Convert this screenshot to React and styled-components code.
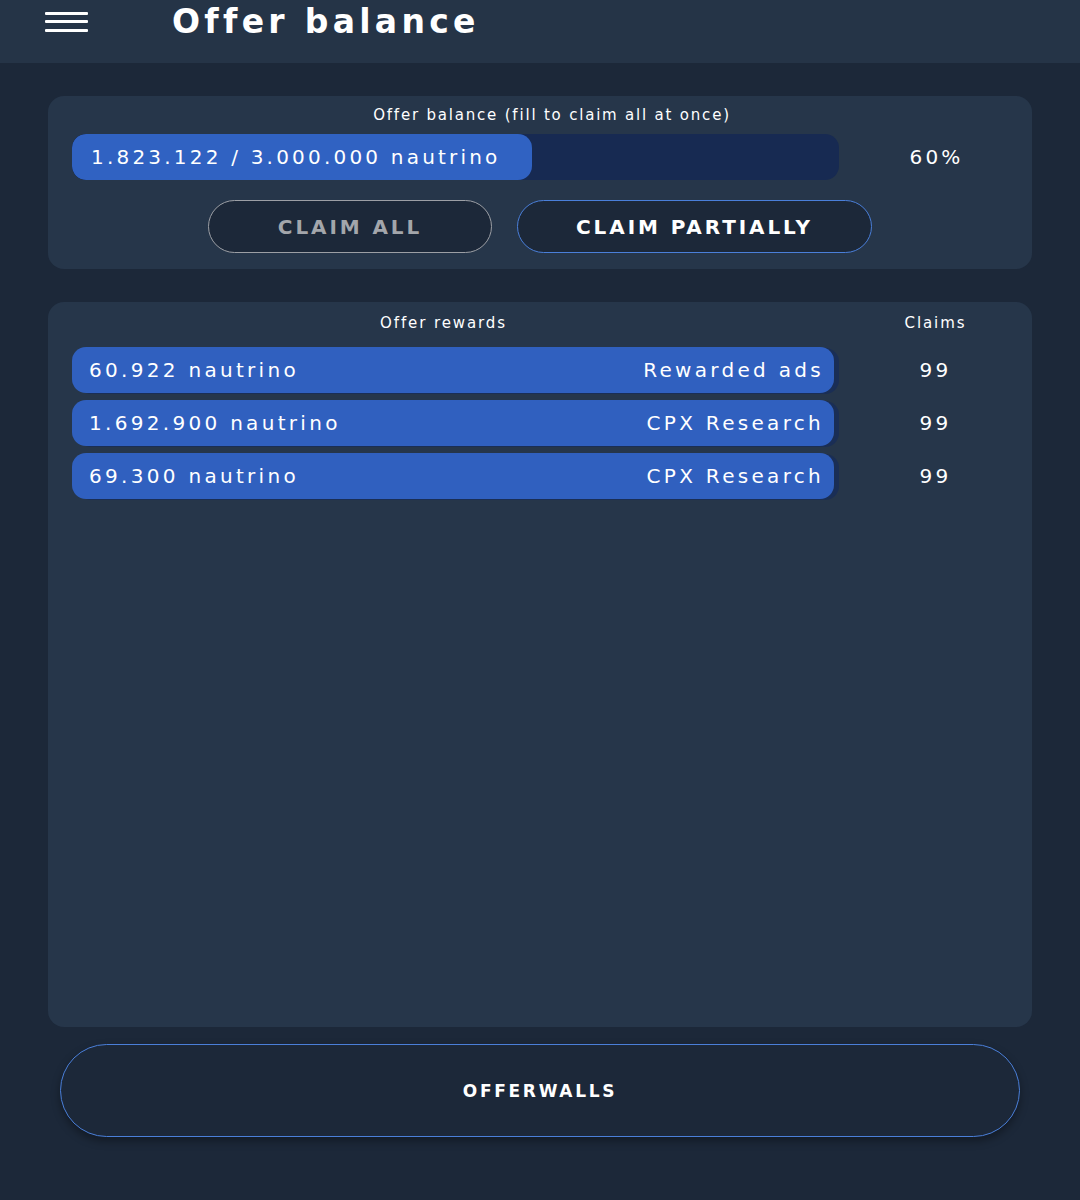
import React from "react";
import styled, { createGlobalStyle } from "styled-components";

const GlobalStyle = createGlobalStyle`
  html, body {
    margin: 0;
    padding: 0;
    background: #1c2839;
  }
  * {
    box-sizing: border-box;
  }
`;

const Page = styled.div`
  display: flex;
  flex-direction: column;
  min-height: 100vh;
  background: #1c2839;
  color: #ffffff;
  font-family: "DejaVu Sans", Verdana, sans-serif;
`;

const TopBar = styled.header`
  display: flex;
  align-items: center;
  height: 63px;
  padding: 0 0 20px 45px;
  background: #253447;
`;

const MenuButton = styled.button`
  display: flex;
  flex-direction: column;
  justify-content: space-between;
  width: 43px;
  height: 20px;
  padding: 0;
  border: none;
  background: transparent;
  cursor: pointer;

  span {
    display: block;
    height: 3px;
    background: #ffffff;
    border-radius: 1px;
  }
`;

const PageTitle = styled.h1`
  margin: 0 0 0 84px;
  font-size: 33px;
  font-weight: bold;
  letter-spacing: 4.3px;
  color: #ffffff;
`;

const Content = styled.main`
  flex: 1;
  display: flex;
  flex-direction: column;
  padding: 33px 48px 63px;
`;

const Card = styled.section`
  background: #26364a;
  border-radius: 16px;
  ${({ $grow }) => $grow && "flex: 1;"}
  margin-bottom: ${({ $gap }) => $gap || 0}px;
`;

const BalanceCard = styled(Card)`
  padding: 10px 0 16px 24px;
`;

const Caption = styled.div`
  font-size: 15px;
  letter-spacing: 1.8px;
  color: #ffffff;
  text-align: center;
`;

const BalanceRow = styled.div`
  display: grid;
  grid-template-columns: 767px 1fr;
  align-items: center;
  margin-top: 10px;
`;

const Track = styled.div`
  height: 46px;
  border-radius: 14px;
  background: #172a52;
  overflow: hidden;
`;

const Fill = styled.div`
  display: flex;
  align-items: center;
  height: 100%;
  padding-left: 19px;
  border-radius: 14px;
  background: #3062c2;
  font-size: 20px;
  letter-spacing: 3.2px;
  white-space: nowrap;
`;

const Percent = styled.div`
  text-align: center;
  font-size: 20px;
  letter-spacing: 3.2px;
  padding-left: 2px;
`;

const ButtonRow = styled.div`
  display: flex;
  justify-content: center;
  gap: 25px;
  margin-top: 20px;
  padding-right: 24px;
`;

const PillButton = styled.button`
  width: ${({ $w }) => $w}px;
  height: 53px;
  border-radius: 27px;
  background: #1c2839;
  border: 1.5px solid ${({ $muted }) => ($muted ? "#9c9fa5" : "#4a7fd9")};
  color: ${({ $muted }) => ($muted ? "#a3a6ab" : "#ffffff")};
  font-family: "DejaVu Sans", Verdana, sans-serif;
  font-size: 20px;
  font-weight: bold;
  letter-spacing: 2.9px;
  cursor: pointer;
`;

const RewardsCard = styled(Card)`
  padding: 12px 0 24px 24px;
`;

const RewardsGrid = styled.div`
  display: grid;
  grid-template-columns: 767px 1fr;
  row-gap: 7px;
  align-items: center;
`;

const ColumnHead = styled.div`
  font-size: 15px;
  letter-spacing: 1.9px;
  text-align: center;
  padding-right: ${({ $shift }) => $shift || 0}px;
  margin-bottom: 8px;
`;

const RewardRow = styled.div`
  display: flex;
  justify-content: space-between;
  align-items: center;
  height: 46px;
  width: 762px;
  padding: 0 10px 0 17px;
  border-radius: 14px;
  background: #3060bf;
  box-shadow: 5px 1px 0 #1a2e55;
  font-size: 20px;
  letter-spacing: 3.3px;
  white-space: nowrap;
`;

const ClaimCount = styled.div`
  text-align: center;
  font-size: 20px;
  letter-spacing: 3.2px;
`;

const WideButton = styled.button`
  height: 93px;
  margin: 17px 12px 0;
  border-radius: 47px;
  background: #1c2839;
  border: 1.5px solid #4a7fd9;
  box-shadow: 0 4px 8px rgba(0, 0, 0, 0.35);
  color: #ffffff;
  font-family: "DejaVu Sans", Verdana, sans-serif;
  font-size: 17px;
  font-weight: bold;
  letter-spacing: 2.7px;
  cursor: pointer;
`;

const rewards = [
  { amount: "60.922 nautrino", source: "Rewarded ads", claims: 99 },
  { amount: "1.692.900 nautrino", source: "CPX Research", claims: 99 },
  { amount: "69.300 nautrino", source: "CPX Research", claims: 99 },
];

const balance = 1823122;
const target = 3000000;

const fmt = (n) => n.toString().replace(/\B(?=(\d{3})+(?!\d))/g, ".");

export default function App() {
  const pct = Math.floor((balance / target) * 100);

  return (
    <>
      <GlobalStyle />
      <Page>
        <TopBar>
          <MenuButton aria-label="Menu">
            <span />
            <span />
            <span />
          </MenuButton>
          <PageTitle>Offer balance</PageTitle>
        </TopBar>

        <Content>
          <BalanceCard $gap={33}>
            <Caption>Offer balance (fill to claim all at once)</Caption>
            <BalanceRow>
              <Track>
                <Fill style={{ width: `${pct}%` }}>
                  {fmt(balance)} / {fmt(target)} nautrino
                </Fill>
              </Track>
              <Percent>{pct}%</Percent>
            </BalanceRow>
            <ButtonRow>
              <PillButton $w={284} $muted>
                CLAIM ALL
              </PillButton>
              <PillButton $w={355}>CLAIM PARTIALLY</PillButton>
            </ButtonRow>
          </BalanceCard>

          <RewardsCard $grow>
            <RewardsGrid>
              <ColumnHead $shift={24}>Offer rewards</ColumnHead>
              <ColumnHead>Claims</ColumnHead>
              {rewards.map((r, i) => (
                <React.Fragment key={i}>
                  <RewardRow>
                    <span>{r.amount}</span>
                    <span>{r.source}</span>
                  </RewardRow>
                  <ClaimCount>{r.claims}</ClaimCount>
                </React.Fragment>
              ))}
            </RewardsGrid>
          </RewardsCard>

          <WideButton>OFFERWALLS</WideButton>
        </Content>
      </Page>
    </>
  );
}
